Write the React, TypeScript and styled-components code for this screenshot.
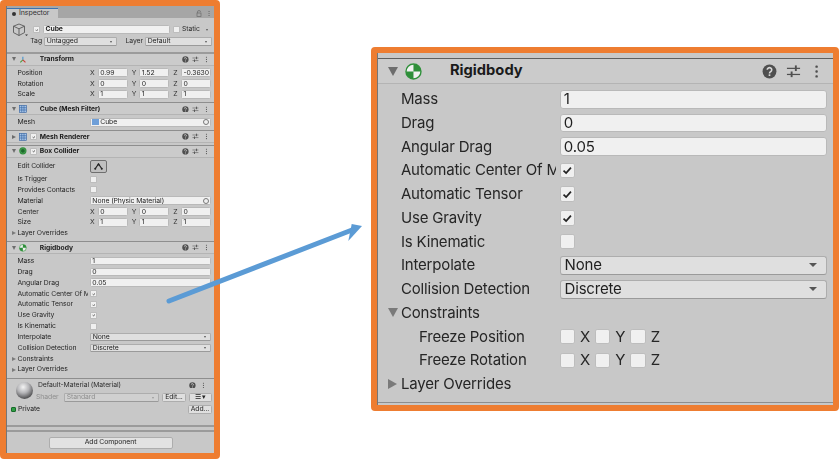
import React from "react";
import styled, { createGlobalStyle } from "styled-components";

const GlobalStyle = createGlobalStyle`
  html, body { margin: 0; padding: 0; background: #fff; }
  body { font-family: Inter, "Liberation Sans", sans-serif; color: #1d1d1d; }
`;

const Page = styled.div`
  position: relative;
  width: 839px;
  height: 459px;
  overflow: hidden;
  display: flex;
  align-items: flex-start;
`;

const Frame = styled.div<{ $w: number; $h: number; $top?: number; $left?: number }>`
  box-sizing: border-box;
  flex: none;
  width: ${(p) => p.$w}px;
  height: ${(p) => p.$h}px;
  margin: ${(p) => p.$top || 0}px 0 0 ${(p) => p.$left || 0}px;
  border: 6px solid #ee7d31;
  border-radius: 4px;
  background: #c8c8c8;
  overflow: hidden;
`;

const Inspector = styled.div<{ $size: number; $blur: number; $pad?: number }>`
  box-sizing: border-box;
  height: 100%;
  font-size: ${(p) => p.$size}px;
  line-height: 1.2;
  letter-spacing: -0.012em;
  padding-top: ${(p) => p.$pad || 0}px;
  border-left: 1px solid #767676;
  filter: blur(${(p) => p.$blur}px);
`;

const TabBar = styled.div`
  display: flex;
  align-items: flex-end;
  justify-content: space-between;
  height: 12px;
  background: #a6a6a6;
`;

const Tab = styled.div`
  box-sizing: border-box;
  display: flex;
  align-items: center;
  gap: 3px;
  width: 51px;
  height: 10px;
  padding-left: 5px;
  background: #c8c8c8;
  border-top: 1px solid #3a72b0;
  font-size: 7px;
  color: #333;
`;

const InfoDot = styled.span`
  width: 4px;
  height: 4px;
  border-radius: 50%;
  background: #333;
`;

const TabTools = styled.div`
  display: flex;
  align-items: center;
  gap: 4px;
  height: 10px;
  padding-right: 2px;
  svg { width: 6px; height: 7px; display: block; }
`;

const TopBlock = styled.div`
  box-sizing: border-box;
  height: 36px;
  padding: 6px 2px 0 5px;
  border-bottom: 2px solid #9b9b9b;
`;

const TopLine = styled.div`
  display: flex;
  align-items: center;
  height: 11px;
  margin-bottom: 1px;
`;

const CubeBox = styled.div`
  flex: none;
  width: 20px;
  height: 14px;
  margin-right: 1px;
  color: #585858;
`;

const Wide = styled.div<{ $w: number; $ml?: number }>`
  flex: none;
  width: ${(p) => p.$w}px;
  margin-left: ${(p) => p.$ml || 0}px;
`;

const TopLabel = styled.span<{ $w: number; $align?: string }>`
  flex: none;
  width: ${(p) => p.$w}px;
  text-align: ${(p) => p.$align || "left"};
  padding-right: 1px;
  box-sizing: border-box;
  color: #2c2c2c;
`;

const Section = styled.section`
  border-bottom: 1px solid #8e8e8e;
  padding-bottom: 0.38em;
`;

const Collapsed = styled.section`
  border-bottom: 1px solid #8e8e8e;
`;

const HeaderBar = styled.header<{ $line?: boolean }>`
  box-sizing: border-box;
  display: flex;
  align-items: center;
  height: 1.75em;
  padding-left: 0.67em;
  margin-bottom: 0.2em;
  background: #cbcbcb;
  border-bottom: 1px solid #b4b4b4;
  border-top: ${(p) => (p.$line ? "1px solid #5e5e5e" : "0")};
`;

const TriSlot = styled.span`
  flex: none;
  display: flex;
  align-items: center;
  width: 1.13em;
`;

const Tri = styled.span<{ $open?: boolean; $tone?: string }>`
  display: block;
  width: 0;
  height: 0;
  border-style: solid;
  border-color: transparent;
  ${(p) =>
    p.$open
      ? `border-width: .62em .34em 0 .34em; border-top-color: ${p.$tone || "#6d6d6d"};`
      : `border-width: .36em 0 .36em .62em; border-left-color: ${p.$tone || "#6d6d6d"};`}
`;

const Caret = styled.span<{ $tone?: string }>`
  flex: none;
  display: block;
  width: 0;
  height: 0;
  border-style: solid;
  border-color: transparent;
  border-width: 0.32em 0.27em 0 0.27em;
  border-top-color: ${(p) => p.$tone || "#555"};
`;

const IconSlot = styled.span`
  flex: none;
  display: flex;
  width: 1.13em;
  height: 1.13em;
  svg { width: 100%; height: 100%; display: block; }
`;

const CheckSlot = styled.span`
  flex: none;
  display: flex;
  width: 1.87em;
  padding-left: 0.43em;
  box-sizing: border-box;
`;

const Title = styled.span`
  flex: 1;
  font-weight: 700;
  color: #1a1a1a;
  white-space: nowrap;
  font-size: 0.98em;
  letter-spacing: 0;
`;

const Actions = styled.span`
  display: flex;
  align-items: center;
  gap: 0.56em;
  padding-right: 0.6em;
  svg { width: 1em; height: 1em; display: block; }
`;

const Row = styled.div<{ $h?: number }>`
  display: flex;
  align-items: center;
  height: ${(p) => p.$h || 1.584}em;
  padding: 0 0.42em 0 1.53em;
`;

const Label = styled.label<{ $indent?: boolean }>`
  flex: none;
  box-sizing: border-box;
  width: 10.34em;
  margin-right: 0.25em;
  padding-left: ${(p) => (p.$indent ? "1.2em" : "0")};
  color: #262626;
  white-space: nowrap;
  overflow: hidden;
`;

const Field = styled.div`
  box-sizing: border-box;
  flex: 1;
  min-width: 0;
  display: flex;
  align-items: center;
  justify-content: space-between;
  height: 1.25em;
  padding: 0 0.2em;
  background: #f0f0f0;
  border: 1px solid #b9b9b9;
  border-radius: 0.2em;
  color: #1f1f1f;
  white-space: nowrap;
  overflow: hidden;
`;

const Dropdown = styled(Field)<{ $dim?: boolean }>`
  padding: 0 0.6em 0 0.25em;
  background: ${(p) => (p.$dim ? "#d0d0d0" : "#dfdfdf")};
  color: ${(p) => (p.$dim ? "#8f8f8f" : "#1f1f1f")};
  border-color: #adadad;
  border-bottom-color: #9a9a9a;
`;

const Check = styled.span`
  box-sizing: border-box;
  flex: none;
  display: flex;
  align-items: center;
  justify-content: center;
  width: 1.04em;
  height: 1.04em;
  background: #f0f0f0;
  border: 1px solid #bdbdbd;
  border-radius: 0.14em;
  svg { width: 76%; height: 76%; display: block; }
`;

const Axis = styled.span`
  flex: none;
  width: 1.3em;
  text-align: center;
  color: #262626;
`;

const VecCell = styled.div`
  flex: 1;
  min-width: 0;
  display: flex;
  align-items: center;
  gap: 0.35em;
`;

const VecLetter = styled.span`
  flex: none;
  width: 0.8em;
  color: #333;
`;

const VecRow = styled.div`
  flex: 1;
  min-width: 0;
  display: flex;
  gap: 0.55em;
`;

const ObjectIcon = styled.span`
  flex: none;
  width: 0.95em;
  height: 0.95em;
  margin-right: 0.2em;
  background: #6f9fd8;
`;

const Grow = styled.span`
  flex: 1;
`;

const ClearDot = styled.span`
  flex: none;
  width: 0.9em;
  height: 0.9em;
  border: 1px solid #777;
  border-radius: 50%;
  box-sizing: border-box;
`;

const EditButton = styled.div`
  box-sizing: border-box;
  display: flex;
  align-items: center;
  justify-content: center;
  width: 17px;
  height: 13px;
  background: #c0c0c0;
  border: 1px solid #6f6f6f;
  border-radius: 2px;
  svg { width: 9px; height: 7px; display: block; }
`;

const MaterialBlock = styled.section`
  box-sizing: border-box;
  height: 48px;
  padding: 1px 2px 0 4px;
  border-bottom: 2px solid #9b9b9b;
`;

const MaterialTop = styled.div`
  display: flex;
  height: 24px;
`;

const Sphere = styled.div`
  flex: none;
  width: 17px;
  height: 17px;
  margin: 2px 5px 0 5px;
  border-radius: 50%;
  background: radial-gradient(circle at 42% 30%, #f4f4f4 0%, #b5b5b8 38%, #5a5a5c 72%, #2d2d2f 100%);
`;

const MaterialMain = styled.div`
  flex: 1;
  min-width: 0;
`;

const MaterialName = styled.div`
  display: flex;
  align-items: center;
  justify-content: space-between;
  height: 11px;
  padding-right: 1px;
  color: #303030;
`;

const ShaderRow = styled.div`
  display: flex;
  align-items: center;
  gap: 3px;
  height: 10px;
  margin: 2px 0 0 -2px;
`;

const ShaderLabel = styled.span`
  width: 27px;
  color: #8f8f8f;
`;

const SmallButton = styled.div<{ $w: number }>`
  box-sizing: border-box;
  flex: none;
  display: flex;
  align-items: center;
  justify-content: center;
  width: ${(p) => p.$w}px;
  height: 9px;
  background: #dfdfdf;
  border: 1px solid #adadad;
  border-radius: 1.5px;
  color: #222;
`;

const PrivateRow = styled.div`
  display: flex;
  align-items: center;
  height: 12px;
`;

const GreenBox = styled.span`
  width: 5px;
  height: 5px;
  margin-right: 2px;
  border-radius: 1px;
  background: #2f9e44;
  border: 0.5px solid #176b2a;
  box-sizing: border-box;
`;

const Spacer = styled.div`
  box-sizing: border-box;
  height: 5px;
  border-bottom: 2px solid #9b9b9b;
`;

const Footer = styled.div`
  display: flex;
  justify-content: center;
  padding-top: 5px;
`;

const AddButton = styled.div`
  box-sizing: border-box;
  display: flex;
  align-items: center;
  justify-content: center;
  width: 124px;
  height: 12px;
  background: #e2e2e2;
  border: 1px solid #adadad;
  border-radius: 2px;
  color: #222;
`;

const ArrowLayer = styled.svg`
  position: absolute;
  left: 0;
  top: 0;
  width: 839px;
  height: 459px;
  pointer-events: none;
`;

const CheckMark = () => (
  <svg viewBox="0 0 12 12">
    <path d="M1.8 6.5 L4.8 9.4 L10.4 3" fill="none" stroke="#222" strokeWidth="2" />
  </svg>
);

const HelpIcon = () => (
  <svg viewBox="0 0 16 16">
    <circle cx="8" cy="8" r="7.4" fill="#4f4f4f" />
    <path d="M5.6 6.2a2.4 2.3 0 1 1 3.6 2c-.8.5-1.2.9-1.2 1.8" fill="none" stroke="#d8d8d8" strokeWidth="1.7" />
    <rect x="7.1" y="11" width="1.8" height="1.8" fill="#d8d8d8" />
  </svg>
);

const SliderIcon = () => (
  <svg viewBox="0 0 16 16" fill="#4f4f4f">
    <rect x="1" y="4" width="14" height="1.3" />
    <rect x="9.5" y="1.5" width="2" height="6" />
    <rect x="1" y="10.5" width="14" height="1.3" />
    <rect x="5" y="8" width="2" height="6" />
  </svg>
);

const DotsIcon = () => (
  <svg viewBox="0 0 16 16" fill="#4f4f4f">
    <rect x="6.8" y="1.5" width="2.6" height="2.6" rx="1" />
    <rect x="6.8" y="6.7" width="2.6" height="2.6" rx="1" />
    <rect x="6.8" y="11.9" width="2.6" height="2.6" rx="1" />
  </svg>
);

const LockIcon = () => (
  <svg viewBox="0 0 12 14">
    <path d="M3 6V4a3 3 0 0 1 6 0" fill="none" stroke="#6a6a6a" strokeWidth="1.4" />
    <rect x="2" y="6" width="8" height="7" fill="none" stroke="#6a6a6a" strokeWidth="1.4" />
  </svg>
);

const RigidbodyIcon = () => (
  <svg viewBox="0 0 18 18">
    <circle cx="9" cy="9" r="8.4" fill="#f1f1f1" />
    <path d="M9 9V1a8 8 0 0 1 8 8zM9 9v8a8 8 0 0 1-8-8z" fill="#2f8f3a" />
    <circle cx="9" cy="9" r="8" fill="none" stroke="#2f8f3a" strokeWidth="1.5" />
  </svg>
);

const TransformIcon = () => (
  <svg viewBox="0 0 18 18" fill="none" strokeWidth="2.4">
    <path d="M9 9V2" stroke="#3a8fd0" />
    <path d="M9 9L3 15" stroke="#4a9a3c" />
    <path d="M9 9L15 15" stroke="#cc3b33" />
  </svg>
);

const GridIcon = () => (
  <svg viewBox="0 0 18 18" fill="#a6c4e8" stroke="#2f5f9f" strokeWidth="1.4">
    <rect x="1" y="1" width="16" height="16" />
    <path d="M6.3 1v16M11.7 1v16M1 6.3h16M1 11.7h16" fill="none" />
  </svg>
);

const ColliderIcon = () => (
  <svg viewBox="0 0 18 18">
    <circle cx="9" cy="9" r="8.4" fill="#2f8f3a" />
    <path d="M9 3.5l5 2.6v5.8L9 14.5l-5-2.6V6.1z" fill="#1c6b2a" stroke="#7cc48a" strokeWidth=".8" />
  </svg>
);

const CubeIcon = () => (
  <svg viewBox="0 0 20 14" fill="none" stroke="currentColor" strokeWidth="0.9">
    <path d="M7 1l5.5 2.2v6.4L7 12.5 1.5 9.6V3.2zM1.5 3.2L7 5.8l5.5-2.6M7 5.8v6.7" />
    <path d="M13 11.5h3l-1.5 1.5z" fill="#333" stroke="none" />
  </svg>
);

const ColliderEdit = () => (
  <svg viewBox="0 0 18 14">
    <path d="M2 12L9 2l7 10" fill="none" stroke="#222" strokeWidth="2.4" />
    <circle cx="9" cy="3" r="2" fill="#222" />
    <circle cx="2.5" cy="11.5" r="2" fill="#222" />
    <circle cx="15.5" cy="11.5" r="2" fill="#222" />
  </svg>
);

const Tools = () => (
  <Actions>
    <HelpIcon />
    <SliderIcon />
    <DotsIcon />
  </Actions>
);

type HeaderProps = {
  title: string;
  icon: React.ReactNode;
  open?: boolean;
  toggle?: boolean;
  line?: boolean;
};

const ComponentHeader = ({ title, icon, open = true, toggle, line }: HeaderProps) => (
  <HeaderBar $line={line}>
    <TriSlot>
      <Tri $open={open} />
    </TriSlot>
    <IconSlot>{icon}</IconSlot>
    <CheckSlot>
      {toggle && (
        <Check>
          <CheckMark />
        </Check>
      )}
    </CheckSlot>
    <Title>{title}</Title>
    <Tools />
  </HeaderBar>
);

const TextRow = ({ label, value }: { label: string; value: string }) => (
  <Row>
    <Label>{label}</Label>
    <Field>{value}</Field>
  </Row>
);

const CheckRow = ({ label, on }: { label: string; on?: boolean }) => (
  <Row>
    <Label>{label}</Label>
    <Check>{on && <CheckMark />}</Check>
  </Row>
);

const DropRow = ({ label, value }: { label: string; value: string }) => (
  <Row>
    <Label>{label}</Label>
    <Dropdown>
      {value}
      <Caret />
    </Dropdown>
  </Row>
);

const FoldLine = styled(Row)`
  padding-left: 0.67em;
  color: #262626;
`;

const FoldTri = styled.span`
  display: flex;
  width: 0.86em;
`;

const FoldRow = ({ label, open }: { label: string; open?: boolean }) => (
  <FoldLine>
    <FoldTri>
      <Tri $open={open} $tone="#7a7a7a" />
    </FoldTri>
    {label}
  </FoldLine>
);

const VecFields = ({ label, values }: { label: string; values: string[] }) => (
  <Row>
    <Label>{label}</Label>
    <VecRow>
      {["X", "Y", "Z"].map((a, i) => (
        <VecCell key={a}>
          <VecLetter>{a}</VecLetter>
          <Field>{values[i]}</Field>
        </VecCell>
      ))}
    </VecRow>
  </Row>
);

const FreezeRow = ({ label }: { label: string }) => (
  <Row>
    <Label $indent>{label}</Label>
    {["X", "Y", "Z"].map((a) => (
      <React.Fragment key={a}>
        <Check />
        <Axis>{a}</Axis>
      </React.Fragment>
    ))}
  </Row>
);

const RigidbodyBody = ({ expanded }: { expanded?: boolean }) => (
  <>
    <TextRow label="Mass" value="1" />
    <TextRow label="Drag" value="0" />
    <TextRow label="Angular Drag" value="0.05" />
    <CheckRow label="Automatic Center Of Mass" on />
    <CheckRow label="Automatic Tensor" on />
    <CheckRow label="Use Gravity" on />
    <CheckRow label="Is Kinematic" />
    <DropRow label="Interpolate" value="None" />
    <DropRow label="Collision Detection" value="Discrete" />
    <FoldRow label="Constraints" open={expanded} />
    {expanded && (
      <>
        <FreezeRow label="Freeze Position" />
        <FreezeRow label="Freeze Rotation" />
      </>
    )}
    <FoldRow label="Layer Overrides" />
  </>
);

export default function App() {
  return (
    <>
      <GlobalStyle />
      <Page>
        <Frame $w={220} $h={459}>
          <Inspector $size={6.85} $blur={0.4}>
            <TabBar>
              <Tab>
                <InfoDot />
                Inspector
              </Tab>
              <TabTools>
                <LockIcon />
                <DotsIcon />
              </TabTools>
            </TabBar>
            <TopBlock>
              <TopLine>
                <CubeBox>
                  <CubeIcon />
                </CubeBox>
                <Check>
                  <CheckMark />
                </Check>
                <Wide $w={127} $ml={3}>
                  <Field>
                    <b>Cube</b>
                  </Field>
                </Wide>
                <Wide $w={7} $ml={3}>
                  <Check />
                </Wide>
                <TopLabel $w={26}>&nbsp;Static</TopLabel>
                <Caret />
              </TopLine>
              <TopLine>
                <TopLabel $w={31} $align="right">
                  Tag
                </TopLabel>
                <Wide $w={73} $ml={1}>
                  <Dropdown>
                    Untagged
                    <Caret />
                  </Dropdown>
                </Wide>
                <TopLabel $w={27} $align="right">
                  Layer
                </TopLabel>
                <Wide $w={67} $ml={1}>
                  <Dropdown>
                    Default
                    <Caret />
                  </Dropdown>
                </Wide>
              </TopLine>
            </TopBlock>

            <Section>
              <ComponentHeader title="Transform" icon={<TransformIcon />} />
              <VecFields label="Position" values={["0.99", "1.52", "-0.3630"]} />
              <VecFields label="Rotation" values={["0", "0", "0"]} />
              <VecFields label="Scale" values={["1", "1", "1"]} />
            </Section>

            <Section>
              <ComponentHeader title="Cube (Mesh Filter)" icon={<GridIcon />} />
              <Row>
                <Label>Mesh</Label>
                <Field>
                  <ObjectIcon />
                  Cube
                  <Grow />
                  <ClearDot />
                </Field>
              </Row>
            </Section>

            <Collapsed>
              <ComponentHeader title="Mesh Renderer" icon={<GridIcon />} open={false} toggle />
            </Collapsed>

            <Section>
              <ComponentHeader title="Box Collider" icon={<ColliderIcon />} toggle />
              <Row $h={2.15}>
                <Label>Edit Collider</Label>
                <EditButton>
                  <ColliderEdit />
                </EditButton>
              </Row>
              <CheckRow label="Is Trigger" />
              <CheckRow label="Provides Contacts" />
              <Row>
                <Label>Material</Label>
                <Field>
                  None (Physic Material)
                  <Grow />
                  <ClearDot />
                </Field>
              </Row>
              <VecFields label="Center" values={["0", "0", "0"]} />
              <VecFields label="Size" values={["1", "1", "1"]} />
              <FoldRow label="Layer Overrides" />
            </Section>

            <Section>
              <ComponentHeader title="Rigidbody" icon={<RigidbodyIcon />} />
              <RigidbodyBody />
            </Section>

            <MaterialBlock>
              <MaterialTop>
                <Sphere />
                <MaterialMain>
                  <MaterialName>
                    Default-Material (Material)
                    <Actions>
                      <HelpIcon />
                      <DotsIcon />
                    </Actions>
                  </MaterialName>
                  <ShaderRow>
                    <ShaderLabel>Shader</ShaderLabel>
                    <Wide $w={95}>
                      <Dropdown $dim>
                        Standard
                        <Caret $tone="#999" />
                      </Dropdown>
                    </Wide>
                    <SmallButton $w={24}>Edit...</SmallButton>
                    <SmallButton $w={23}>☰ ▾</SmallButton>
                  </ShaderRow>
                </MaterialMain>
              </MaterialTop>
              <PrivateRow>
                <GreenBox />
                Private
                <Grow />
                <SmallButton $w={24}>Add...</SmallButton>
              </PrivateRow>
            </MaterialBlock>
            <Spacer />

            <Footer>
              <AddButton>Add Component</AddButton>
            </Footer>
          </Inspector>
        </Frame>

        <Frame $w={468} $h={364} $top={47} $left={151}>
          <Inspector $size={15} $blur={0.3} $pad={5}>
            <Section>
              <ComponentHeader title="Rigidbody" icon={<RigidbodyIcon />} line />
              <RigidbodyBody expanded />
            </Section>
          </Inspector>
        </Frame>

        <ArrowLayer viewBox="0 0 839 459">
          <line x1="169" y1="301" x2="352" y2="230" stroke="#5b9bd5" strokeWidth="5" strokeLinecap="round" />
          <polygon points="351.7,224 362,226 348.3,241" fill="#5b9bd5" />
        </ArrowLayer>
      </Page>
    </>
  );
}
